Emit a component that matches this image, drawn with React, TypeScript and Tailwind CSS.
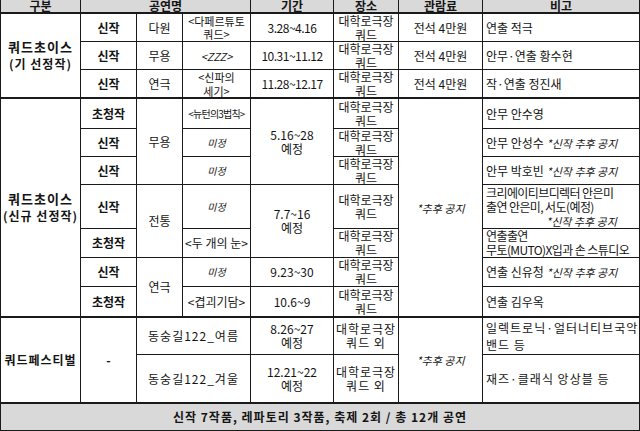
import type { ReactNode } from "react";

type CellProps = {
  className?: string;
  children?: ReactNode;
};

// one grid cell with right/bottom rule; placement comes from className
function Cell({ className = "", children }: CellProps) {
  return (
    <div
      className={`flex flex-col items-center justify-center overflow-hidden border-r border-b border-[#1a1a1a] text-center leading-[14px] ${className}`}
    >
      {children}
    </div>
  );
}

const place = (
  <>
    <span>대학로극장</span>
    <span>쿼드</span>
  </>
);

export default function App() {
  return (
    <div
      className="grid h-[431px] w-[640px] grid-cols-[80px_56px_46px_68px_83px_65px_84px_157px] grid-rows-[14px_28px_28px_29px_30px_28px_28px_44px_29px_29px_31px_37px_49px_27px] border-l border-[#1a1a1a] bg-white text-[12px] text-[#141414]"
      style={{ fontFamily: '"Noto Sans CJK KR", "Noto Sans", sans-serif' }}
    >
      {/* header */}
      <Cell className="col-start-1 row-start-1 justify-end! bg-[#d9d9d9] font-bold leading-[12px]! border-b-2">구분</Cell>
      <Cell className="col-span-3 col-start-2 row-start-1 justify-end! bg-[#d9d9d9] font-bold leading-[12px]! border-b-2">공연명</Cell>
      <Cell className="col-start-5 row-start-1 justify-end! bg-[#d9d9d9] font-bold leading-[12px]! border-b-2">기간</Cell>
      <Cell className="col-start-6 row-start-1 justify-end! bg-[#d9d9d9] font-bold leading-[12px]! border-b-2">장소</Cell>
      <Cell className="col-start-7 row-start-1 justify-end! bg-[#d9d9d9] font-bold leading-[12px]! border-b-2">관람료</Cell>
      <Cell className="col-start-8 row-start-1 justify-end! bg-[#d9d9d9] font-bold leading-[12px]! border-b-2">비고</Cell>

      {/* 쿼드초이스 (기 선정작) */}
      <Cell className="col-start-1 row-span-3 row-start-2 gap-[3px] font-bold tracking-[1px] border-b-2">
        <span className="text-[13px]">쿼드초이스</span>
        <span>(기 선정작)</span>
      </Cell>
      <Cell className="col-start-2 row-start-2 font-bold">신작</Cell>
      <Cell className="col-start-3 row-start-2">다원</Cell>
      <Cell className="col-start-4 row-start-2 text-[11px] leading-[13px]!">
        <span>&lt;다페르튜토</span>
        <span>쿼드&gt;</span>
      </Cell>
      <Cell className="col-start-5 row-start-2 tracking-[-0.5px]">3.28~4.16</Cell>
      <Cell className="col-start-6 row-start-2">{place}</Cell>
      <Cell className="col-start-7 row-start-2">전석 4만원</Cell>
      <Cell className="col-start-8 row-start-2 items-start! pl-[3px]">연출 적극</Cell>

      <Cell className="col-start-2 row-start-3 font-bold">신작</Cell>
      <Cell className="col-start-3 row-start-3">무용</Cell>
      <Cell className="col-start-4 row-start-3 text-[11px] italic">&lt;ZZZ&gt;</Cell>
      <Cell className="col-start-5 row-start-3 tracking-[-0.5px]">10.31~11.12</Cell>
      <Cell className="col-start-6 row-start-3">{place}</Cell>
      <Cell className="col-start-7 row-start-3">전석 4만원</Cell>
      <Cell className="col-start-8 row-start-3 items-start! pl-[3px]">안무·연출 황수현</Cell>

      <Cell className="col-start-2 row-start-4 font-bold border-b-2">신작</Cell>
      <Cell className="col-start-3 row-start-4 border-b-2">연극</Cell>
      <Cell className="col-start-4 row-start-4 text-[11px] border-b-2">
        <span>&lt;신파의</span>
        <span>세기&gt;</span>
      </Cell>
      <Cell className="col-start-5 row-start-4 tracking-[-0.5px] border-b-2">11.28~12.17</Cell>
      <Cell className="col-start-6 row-start-4 border-b-2">{place}</Cell>
      <Cell className="col-start-7 row-start-4 border-b-2">전석 4만원</Cell>
      <Cell className="col-start-8 row-start-4 items-start! pl-[3px] border-b-2">작·연출 정진새</Cell>

      {/* 쿼드초이스 (신규 선정작) */}
      <Cell className="col-start-1 row-span-7 row-start-5 gap-[3px] font-bold tracking-[1px] border-b-2">
        <span className="text-[13px]">쿼드초이스</span>
        <span>(신규 선정작)</span>
      </Cell>
      <Cell className="col-start-2 row-start-5 font-bold">초청작</Cell>
      <Cell className="col-start-2 row-start-6 font-bold">신작</Cell>
      <Cell className="col-start-2 row-start-7 font-bold">신작</Cell>
      <Cell className="col-start-2 row-start-8 font-bold">신작</Cell>
      <Cell className="col-start-2 row-start-9 font-bold">초청작</Cell>
      <Cell className="col-start-2 row-start-10 font-bold">신작</Cell>
      <Cell className="col-start-2 row-start-11 font-bold border-b-2">초청작</Cell>

      <Cell className="col-start-3 row-span-3 row-start-5">무용</Cell>
      <Cell className="col-start-3 row-span-2 row-start-8">전통</Cell>
      <Cell className="col-start-3 row-span-2 row-start-10 border-b-2">연극</Cell>

      <Cell className="col-start-4 row-start-5 text-[10px] tracking-[-0.8px]">&lt;뉴턴의3법칙&gt;</Cell>
      <Cell className="col-start-4 row-start-6 text-[10px] italic">미정</Cell>
      <Cell className="col-start-4 row-start-7 text-[10px] italic">미정</Cell>
      <Cell className="col-start-4 row-start-8 text-[10px] italic">미정</Cell>
      <Cell className="col-start-4 row-start-9">&lt;두 개의 눈&gt;</Cell>
      <Cell className="col-start-4 row-start-10 text-[10px] italic">미정</Cell>
      <Cell className="col-start-4 row-start-11 border-b-2">&lt;겹괴기담&gt;</Cell>

      <Cell className="col-start-5 row-span-3 row-start-5">
        <span>5.16~28</span>
        <span>예정</span>
      </Cell>
      <Cell className="col-start-5 row-span-2 row-start-8">
        <span>7.7~16</span>
        <span>예정</span>
      </Cell>
      <Cell className="col-start-5 row-start-10">9.23~30</Cell>
      <Cell className="col-start-5 row-start-11 border-b-2">10.6~9</Cell>

      <Cell className="col-start-6 row-start-5">{place}</Cell>
      <Cell className="col-start-6 row-start-6">{place}</Cell>
      <Cell className="col-start-6 row-start-7">{place}</Cell>
      <Cell className="col-start-6 row-start-8">{place}</Cell>
      <Cell className="col-start-6 row-start-9">{place}</Cell>
      <Cell className="col-start-6 row-start-10">{place}</Cell>
      <Cell className="col-start-6 row-start-11 border-b-2">{place}</Cell>

      <Cell className="col-start-7 row-span-7 row-start-5 text-[11px] italic border-b-2">*추후 공지</Cell>

      <Cell className="col-start-8 row-start-5 items-start! pl-[3px]">안무 안수영</Cell>
      <Cell className="col-start-8 row-start-6 items-start! pl-[3px]">
        <span>
          안무 안성수 <i className="text-[11px]">*신작 추후 공지</i>
        </span>
      </Cell>
      <Cell className="col-start-8 row-start-7 items-start! pl-[3px]">
        <span>
          안무 박호빈 <i className="text-[11px]">*신작 추후 공지</i>
        </span>
      </Cell>
      <Cell className="col-start-8 row-start-8 items-start! pl-[3px] tracking-[-0.6px]">
        <span>크리에이티브디렉터 안은미</span>
        <span>출연 안은미, 서도(예정)</span>
        <i className="pl-[60px] text-[11px] tracking-normal">*신작 추후 공지</i>
      </Cell>
      <Cell className="col-start-8 row-start-9 items-start! pl-[3px] tracking-[-0.6px]">
        <span>연출출연</span>
        <span>무토(MUTO)X입과 손 스튜디오</span>
      </Cell>
      <Cell className="col-start-8 row-start-10 items-start! pl-[3px]">
        <span>
          연출 신유청 <i className="text-[11px]">*신작 추후 공지</i>
        </span>
      </Cell>
      <Cell className="col-start-8 row-start-11 items-start! pl-[3px] border-b-2">연출 김우옥</Cell>

      {/* 쿼드페스티벌 */}
      <Cell className="col-start-1 row-span-2 row-start-12 font-bold tracking-[1px] border-b-2">쿼드페스티벌</Cell>
      <Cell className="col-start-2 row-span-2 row-start-12 font-bold border-b-2">-</Cell>
      <Cell className="col-span-2 col-start-3 row-start-12 tracking-[1px]">동숭길122_여름</Cell>
      <Cell className="col-span-2 col-start-3 row-start-13 tracking-[1px] border-b-2">동숭길122_겨울</Cell>
      <Cell className="col-start-5 row-start-12">
        <span>8.26~27</span>
        <span>예정</span>
      </Cell>
      <Cell className="col-start-5 row-start-13 border-b-2">
        <span>12.21~22</span>
        <span>예정</span>
      </Cell>
      <Cell className="col-start-6 row-start-12 tracking-[1px]">
        <span>대학로극장</span>
        <span>쿼드 외</span>
      </Cell>
      <Cell className="col-start-6 row-start-13 tracking-[1px] border-b-2">
        <span>대학로극장</span>
        <span>쿼드 외</span>
      </Cell>
      <Cell className="col-start-7 row-span-2 row-start-12 text-[11px] italic border-b-2">*추후 공지</Cell>
      <Cell className="col-start-8 row-start-12 items-start! pl-[3px] leading-[17px]! tracking-[1px]">
        <span>일렉트로닉·얼터너티브국악</span>
        <span>밴드 등</span>
      </Cell>
      <Cell className="col-start-8 row-start-13 items-start! pl-[3px] tracking-[1px] border-b-2">재즈·클래식 앙상블 등</Cell>

      {/* footer */}
      <Cell className="col-span-8 col-start-1 row-start-14 bg-[#d9d9d9] font-bold tracking-[1px]">
        신작 7작품, 레파토리 3작품, 축제 2회 / 총 12개 공연
      </Cell>
    </div>
  );
}
